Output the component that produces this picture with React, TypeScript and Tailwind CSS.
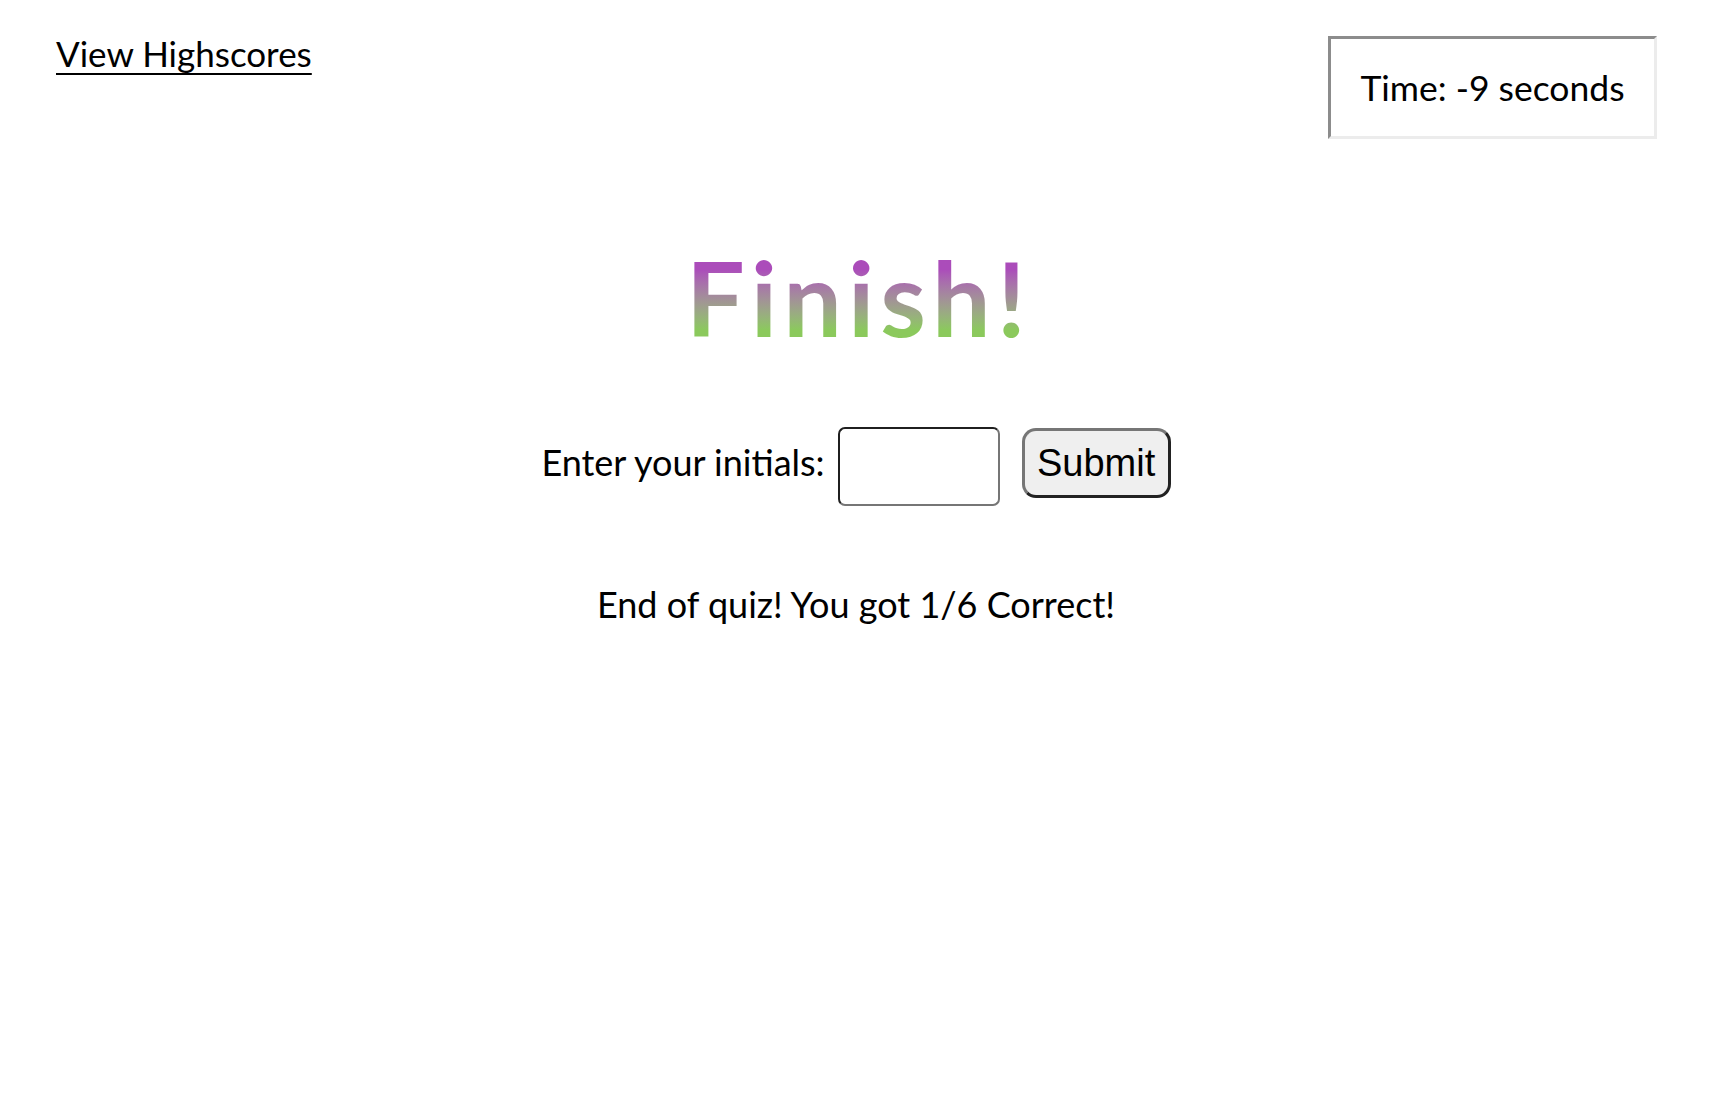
export default function App() {
  return (
    <div className="min-h-screen bg-white font-['Lato',sans-serif] text-black">
      <header className="flex items-start justify-between pl-[56px] pr-[69px] pt-[36px]">
        <a href="#" className="mt-[0px] text-[35px] leading-none underline decoration-2 underline-offset-[6px]">
          View Highscores
        </a>
        <div className="flex h-[103px] w-[329px] items-center justify-center border-[3px] border-t-[#8c8c8c] border-l-[#8c8c8c] border-r-[#ececec] border-b-[#ececec] text-[35.5px] leading-none">
          Time: -9 seconds
        </div>
      </header>

      <main className="flex flex-col items-center pr-[14px]">
        <h1 className="mt-[103px] bg-gradient-to-b from-[#ab4cba] from-25% to-[#8bc95c] to-80% bg-clip-text pl-[6px] text-[104px] font-bold leading-[110px] tracking-[6px] text-transparent">
          Finish!
        </h1>

        <form className="mt-[75px] flex items-start" onSubmit={(e) => e.preventDefault()}>
          <label htmlFor="initials" className="mt-[17px] text-[36px] leading-none">
            Enter your initials:
          </label>
          <input
            id="initials"
            className="ml-[13px] h-[79px] w-[162px] rounded-[7px] border-2 border-t-[#1f1f1f] border-l-[#1f1f1f] border-r-[#767676] border-b-[#767676] bg-white"
          />
          <button
            type="submit"
            className="ml-[22px] mt-[1px] h-[70px] w-[149px] rounded-[14px] border-[3px] border-t-[#767676] border-l-[#767676] border-r-[#222] border-b-[#222] bg-[#efefef] font-['Liberation_Sans',Arial,sans-serif] text-[38px] leading-none"
          >
            Submit
          </button>
        </form>

        <p className="mt-[80px] text-[36px] leading-none">End of quiz! You got 1/6 Correct!</p>
      </main>
    </div>
  )
}
